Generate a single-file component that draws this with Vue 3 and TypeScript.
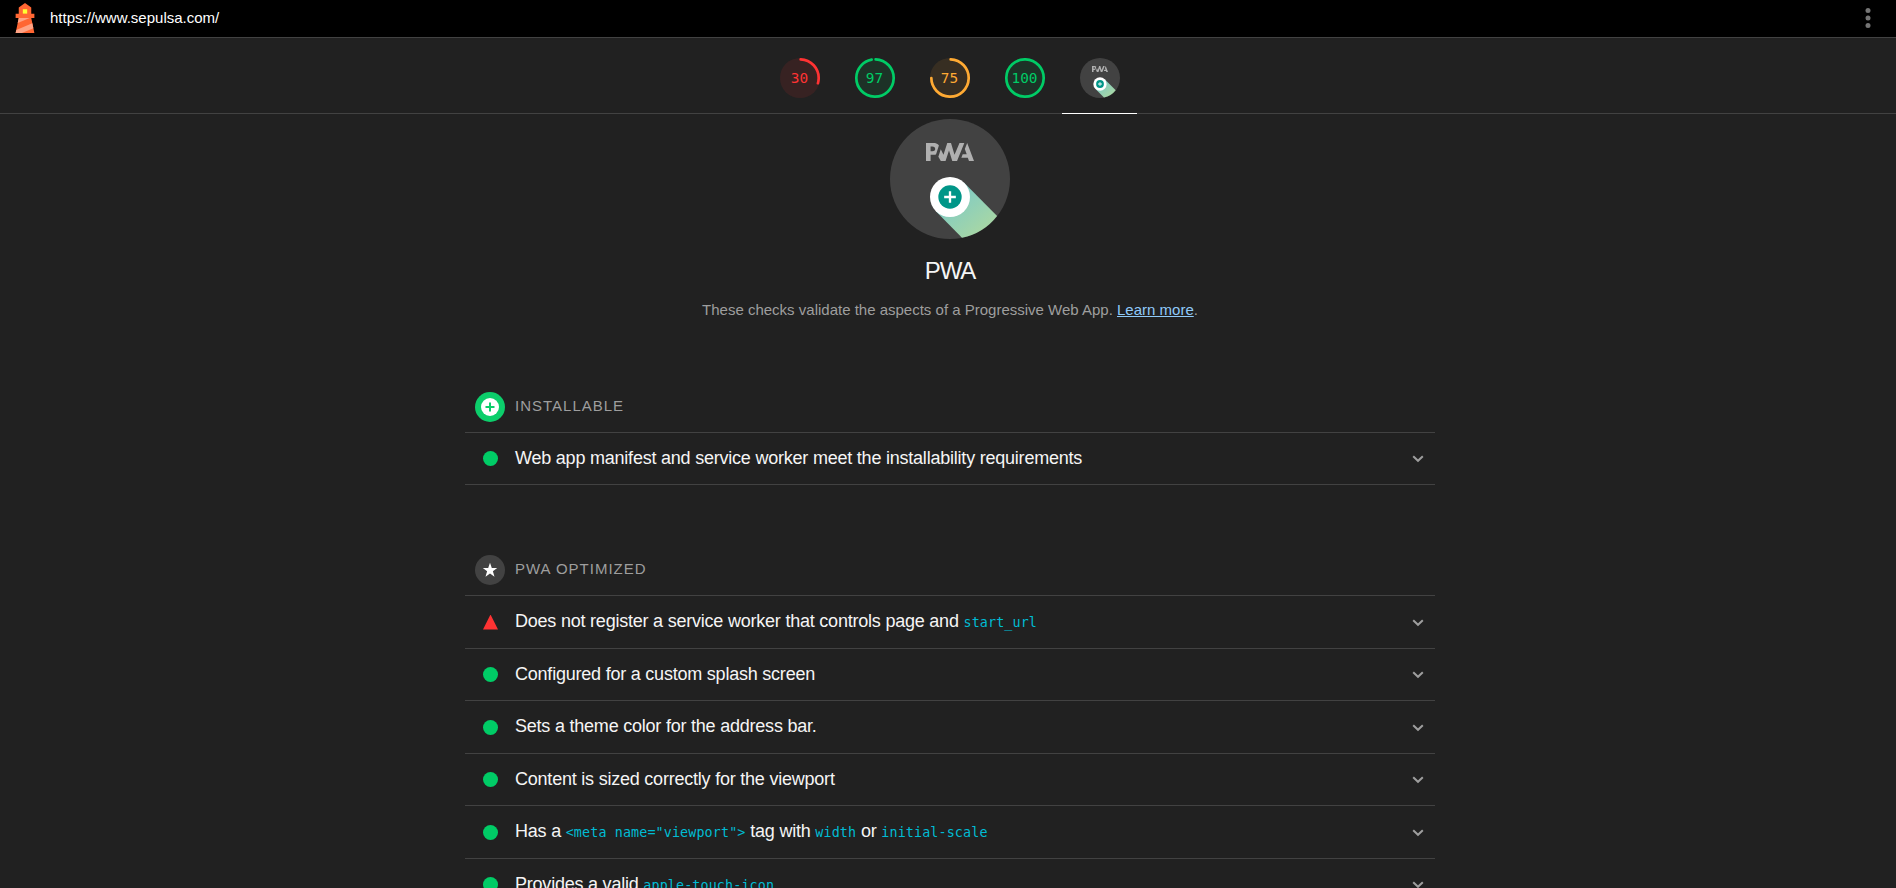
<script setup lang="ts">
interface Gauge { score: number; level: 'fail' | 'pass' | 'average' }
interface Part { text: string; code?: boolean }
interface Audit { passed: boolean; parts: Part[] }
interface Group { title: string; icon: 'plus' | 'star'; audits: Audit[] }

const gauges: Gauge[] = [
  { score: 30, level: 'fail' },
  { score: 97, level: 'pass' },
  { score: 75, level: 'average' },
  { score: 100, level: 'pass' },
]

const circumference = 2 * Math.PI * 56
const dash = (score: number): string => {
  const length = score === 100 ? circumference : (score / 100) * circumference - 4
  return `${length} ${circumference}`
}

const groups: Group[] = [
  {
    title: 'Installable',
    icon: 'plus',
    audits: [
      { passed: true, parts: [{ text: 'Web app manifest and service worker meet the installability requirements' }] },
    ],
  },
  {
    title: 'PWA Optimized',
    icon: 'star',
    audits: [
      { passed: false, parts: [{ text: 'Does not register a service worker that controls page and ' }, { text: 'start_url', code: true }] },
      { passed: true, parts: [{ text: 'Configured for a custom splash screen' }] },
      { passed: true, parts: [{ text: 'Sets a theme color for the address bar.' }] },
      { passed: true, parts: [{ text: 'Content is sized correctly for the viewport' }] },
      {
        passed: true,
        parts: [
          { text: 'Has a ' },
          { text: '<meta name="viewport">', code: true },
          { text: ' tag with ' },
          { text: 'width', code: true },
          { text: ' or ' },
          { text: 'initial-scale', code: true },
        ],
      },
      { passed: true, parts: [{ text: 'Provides a valid ' }, { text: 'apple-touch-icon', code: true }] },
    ],
  },
]
</script>

<template>
  <div class="report">
    <svg class="defs" width="0" height="0" aria-hidden="true">
      <defs>
        <linearGradient id="shadow-fill" x1="76%" y1="83%" x2="24%" y2="25%">
          <stop offset="0" stop-color="#a5d6a7" />
          <stop offset="1" stop-color="#80cbc4" />
        </linearGradient>
        <symbol id="pwa-badge" viewBox="0 0 60 60">
          <circle cx="30" cy="30" r="30" fill="#424242" />
          <g fill="#b0b0b0">
            <path d="M35.66 19.39l.7-1.75h2L37.4 15 38.6 12l3.4 9h-2.51l-.58-1.61z" />
            <path d="M33.52 21l3.65-9h-2.42l-2.5 5.82L30.5 12h-1.86l-1.9 5.82-1.35-2.65-1.21 3.72L25.4 21h2.38l1.72-5.2 1.64 5.2z" />
            <path fill-rule="evenodd" d="M20.3 17.91h1.48c.45 0 .85-.05 1.2-.15l.39-1.18 1.07-3.3a2.64 2.64 0 0 0-.28-.37c-.55-.6-1.36-.91-2.42-.91H18v9h2.3V17.9zm1.96-3.84c.22.22.33.5.33.87 0 .36-.1.65-.29.87-.2.23-.59.35-1.15.35h-.86v-2.41h.87c.52 0 .89.1 1.1.32z" />
          </g>
          <path d="M37.07 31.93L53.55 48.5A30 30 0 0 1 36 59.4L22.93 46.07Z" fill="url(#shadow-fill)" />
          <circle cx="30" cy="39" r="10" fill="#fff" />
          <circle cx="30" cy="39" r="5.835" fill="#009688" />
          <path d="M32.917 39.583h-2.334v2.334h-1.166v-2.334h-2.334v-1.166h2.334v-2.334h1.166v2.334h2.334z" fill="#fff" />
        </symbol>
      </defs>
    </svg>

    <header class="topbar">
      <svg class="logo" viewBox="0 0 48 48">
        <path d="m14 7 10-7 10 7v10h5v7h-5l5 24H9l5-24H9v-7h5V7z" fill="#f63" />
        <path d="M31.561 24H14l-1.689 8.105L31.561 24zM18.983 48H9l1.022-4.907L35.723 32.27l1.663 7.98L18.983 48z" fill="#ffa385" />
        <path d="M20.5 10h7v7h-7z" fill="#ff3" />
      </svg>
      <span class="url">https://www.sepulsa.com/</span>
      <svg class="menu" viewBox="0 0 24 24">
        <circle cx="12" cy="6" r="2" /><circle cx="12" cy="12" r="2" /><circle cx="12" cy="18" r="2" />
      </svg>
    </header>

    <nav class="scores">
      <a v-for="g in gauges" :key="g.score" class="score" :class="g.level">
        <svg class="dial" viewBox="0 0 120 120">
          <circle class="dial-base" cx="60" cy="60" r="60" />
          <circle class="dial-arc" cx="60" cy="60" r="56" :stroke-dasharray="dash(g.score)" transform="rotate(-87.95 60 60)" />
        </svg>
        <span class="value">{{ g.score }}</span>
      </a>
      <a class="score active">
        <svg class="dial"><use href="#pwa-badge" /></svg>
      </a>
    </nav>

    <main class="category">
      <section class="summary">
        <svg class="badge"><use href="#pwa-badge" /></svg>
        <h1 class="title">PWA</h1>
        <p class="description">These checks validate the aspects of a Progressive Web App. <a class="link">Learn more</a>.</p>
      </section>

      <section v-for="group in groups" :key="group.title" class="group">
        <div class="group-header">
          <svg v-if="group.icon === 'plus'" class="group-icon" viewBox="0 0 30 30">
            <circle cx="15" cy="15" r="15" fill="#0cce6b" />
            <circle cx="15" cy="15" r="9" fill="#fff" />
            <path d="M14 10.5h2V14h3.5v2H16v3.5h-2V16h-3.5v-2H14z" fill="#0cce6b" />
          </svg>
          <svg v-else class="group-icon" viewBox="0 0 30 30">
            <circle cx="15" cy="15" r="15" fill="#424242" />
            <path d="M15 7.8l1.8 5.1 5.4.1-4.3 3.3 1.6 5.4-4.5-3.2-4.5 3.2 1.6-5.4L7.8 13l5.4-.1z" fill="#fff" />
          </svg>
          <h2 class="group-title">{{ group.title }}</h2>
        </div>
        <div v-for="(audit, i) in group.audits" :key="i" class="audit">
          <span class="marker" :class="audit.passed ? 'marker-pass' : 'marker-fail'"></span>
          <span class="audit-title"><template v-for="(part, j) in audit.parts" :key="j"><code v-if="part.code" class="code">{{ part.text }}</code><template v-else>{{ part.text }}</template></template></span>
          <svg class="chevron" viewBox="0 0 12 8"><path d="M1.2 1.2 6 5.8l4.8-4.6" /></svg>
        </div>
      </section>
    </main>
  </div>
</template>

<style>
body {
  margin: 0;
  background: #212121;
}
</style>

<style scoped>
.report {
  height: 888px;
  overflow: hidden;
  background: #212121;
  color: #f5f5f5;
  font-family: "Liberation Sans", Arial, sans-serif;
}
.defs {
  display: block;
}
.topbar {
  display: flex;
  align-items: center;
  box-sizing: border-box;
  height: 38px;
  padding: 0 16px 1px 10px;
  background: #000;
  border-bottom: 1px solid #424242;
}
.logo {
  width: 30px;
  height: 30px;
}
.url {
  margin-left: 10px;
  font-size: 15px;
  line-height: 20px;
  color: #fff;
}
.menu {
  width: 30px;
  height: 30px;
  margin-right: -3px;
  margin-left: auto;
  fill: #757575;
}
.scores {
  display: flex;
  justify-content: center;
  box-sizing: border-box;
  height: 76px;
  padding-left: 3px;
  border-bottom: 1px solid #424242;
}
.score {
  display: grid;
  box-sizing: border-box;
  width: 75px;
  height: 76px;
  padding-top: 20px;
  justify-content: center;
  align-content: start;
}
.active {
  border-bottom: 1px solid #fff;
}
.dial {
  grid-area: 1 / 1;
  width: 40px;
  height: 40px;
}
.dial-base {
  fill: currentColor;
  opacity: 0.1;
}
.dial-arc {
  fill: none;
  stroke: currentColor;
  stroke-width: 8;
  stroke-linecap: round;
}
.value {
  grid-area: 1 / 1;
  text-align: center;
  font: 14.4px/40px "DejaVu Sans Mono", monospace;
}
.fail { color: #f33; }
.pass { color: #0c6; }
.average { color: #fa3; }
.category {
  width: 970px;
  margin: 0 auto;
  padding-left: 4px;
}
.summary {
  display: flex;
  flex-direction: column;
  align-items: center;
  box-sizing: border-box;
  height: 265px;
  padding-top: 5px;
}
.badge {
  width: 120px;
  height: 120px;
}
.title {
  margin: 16px 0 0;
  font-size: 24px;
  font-weight: 400;
  line-height: 32px;
  letter-spacing: -1.1px;
}
.description {
  margin: 12px 0 0;
  font-size: 15px;
  line-height: 22px;
  color: #9e9e9e;
}
.link {
  color: #90caf9;
  text-decoration: underline;
}
.group {
  margin-bottom: 57px;
}
.group-header {
  display: flex;
  box-sizing: border-box;
  height: 54px;
  padding: 13px 0 0 10px;
  border-bottom: 1px solid #424242;
}
.group-icon {
  width: 30px;
  height: 30px;
}
.group-title {
  margin: 0 0 0 10px;
  font-size: 15px;
  font-weight: 400;
  line-height: 27px;
  letter-spacing: 1px;
  text-transform: uppercase;
  color: #9e9e9e;
}
.audit {
  display: flex;
  align-items: center;
  box-sizing: border-box;
  height: 52px;
  padding: 0 11px 0 18px;
  border-bottom: 1px solid #424242;
}
.audit:nth-child(even):not(:last-child) {
  height: 53px;
}
.marker {
  width: 15px;
  height: 15px;
  margin-right: 17px;
}
.marker-pass {
  border-radius: 50%;
  background: #0c6;
}
.marker-fail {
  background: #f33;
  clip-path: polygon(50% 0, 100% 100%, 0 100%);
}
.audit-title {
  padding-bottom: 2px;
  font-size: 18px;
  line-height: 24px;
  letter-spacing: -0.22px;
  white-space: pre;
}
.code {
  font: 13.4px/1 "DejaVu Sans Mono", monospace;
  letter-spacing: 0.11px;
  color: #00bcd4;
}
.chevron {
  width: 12px;
  height: 8px;
  margin-top: 1px;
  margin-left: auto;
  fill: none;
  stroke: #9e9e9e;
  stroke-width: 2;
}
</style>
